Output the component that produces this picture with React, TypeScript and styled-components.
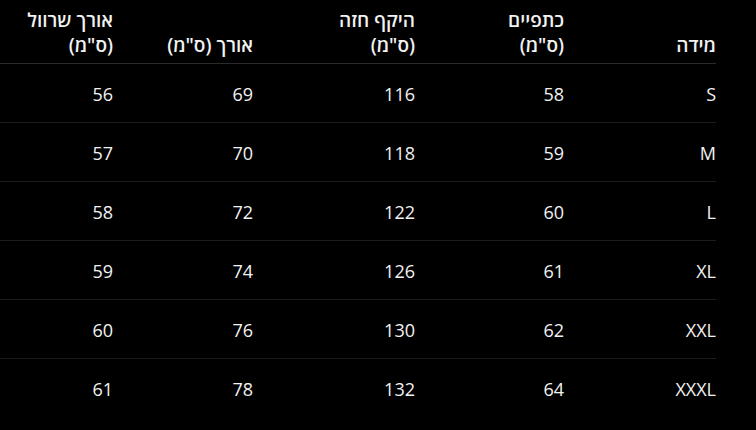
import React from 'react';
import styled, { createGlobalStyle } from 'styled-components';

const GlobalStyle = createGlobalStyle`
  html, body {
    margin: 0;
    padding: 0;
    background: #000;
  }
  body {
    font-family: "Open Sans", "Noto Sans", "DejaVu Sans", sans-serif;
    color: #f2f2f2;
  }
`;

const Page = styled.div`
  width: 756px;
  height: 430px;
  background: #000;
  overflow: hidden;
  direction: rtl;
  padding-right: 40px;
  box-sizing: border-box;
`;

const Table = styled.div`
  display: grid;
  grid-template-columns: 152px 149px 162px 140px 113px;
  width: 716px;
`;

const HeadCell = styled.div`
  height: 64px;
  box-sizing: border-box;
  display: flex;
  align-items: flex-end;
  padding-bottom: 5px;
  font-size: 19px;
  font-weight: 600;
  line-height: 25px;
  text-align: right;
  border-bottom: 1px solid #2a2a2a;
`;

const Cell = styled.div<{ $last?: boolean }>`
  height: 59px;
  box-sizing: border-box;
  display: flex;
  align-items: center;
  font-size: 18px;
  font-weight: 400;
  padding-top: 1px;
  border-bottom: ${(p) => (p.$last ? 'none' : '1px solid #1c1c1c')};
`;

const headers = ['מידה', 'כתפיים\n(ס"מ)', 'היקף חזה\n(ס"מ)', 'אורך (ס"מ)', 'אורך שרוול\n(ס"מ)'];

const rows = [
  ['S', '58', '116', '69', '56'],
  ['M', '59', '118', '70', '57'],
  ['L', '60', '122', '72', '58'],
  ['XL', '61', '126', '74', '59'],
  ['XXL', '62', '130', '76', '60'],
  ['XXXL', '64', '132', '78', '61'],
];

const SizeTable = () => (
  <Table>
    {headers.map((h) => (
      <HeadCell key={h}>
        <span>
          {h.split('\n').map((line, i) => (
            <React.Fragment key={i}>
              {i > 0 && <br />}
              {line}
            </React.Fragment>
          ))}
        </span>
      </HeadCell>
    ))}
    {rows.map((row, r) =>
      row.map((v, c) => (
        <Cell key={`${r}-${c}`} $last={r === rows.length - 1}>
          {v}
        </Cell>
      ))
    )}
  </Table>
);

const App = () => (
  <>
    <GlobalStyle />
    <Page>
      <SizeTable />
    </Page>
  </>
);

export default App;
